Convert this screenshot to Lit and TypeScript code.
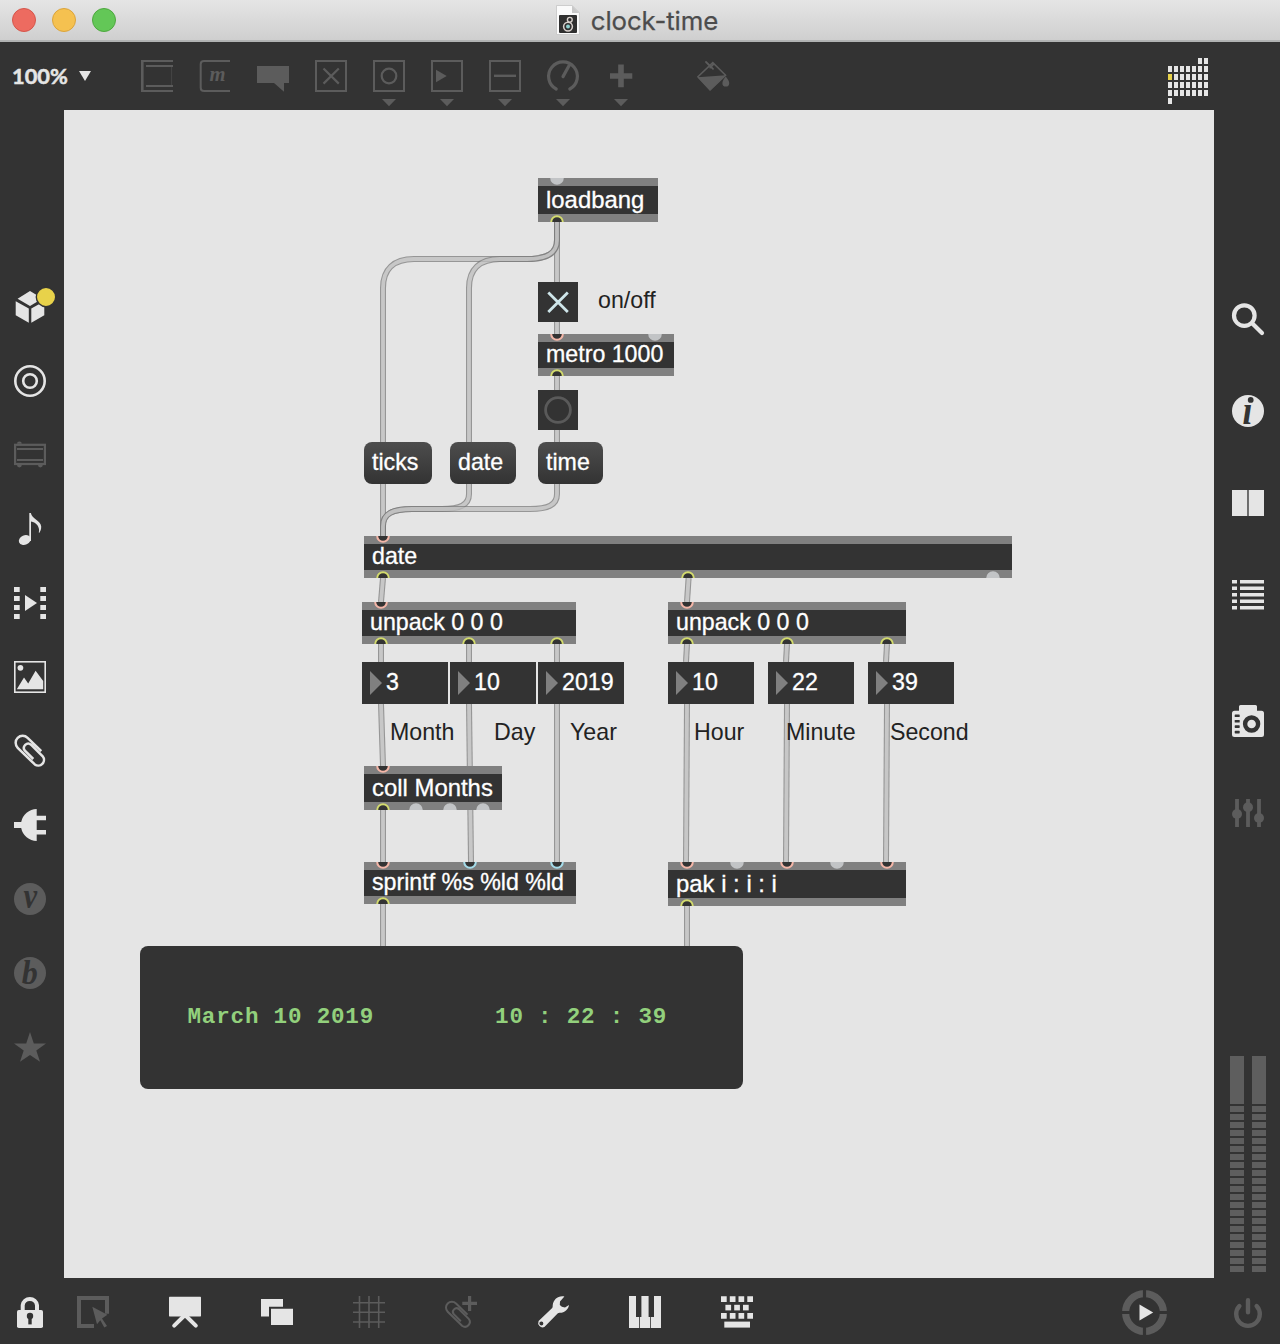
import { LitElement, html, svg, css, type SVGTemplateResult } from "lit";
import { customElement, property } from "lit/decorators.js";
import { styleMap } from "lit/directives/style-map.js";

/* ---------- icon shapes, each drawn in a 32 x 32 box ---------- */

const CLIP = "M27.3 16.2 L13.6 2.9 A7 7 0 0 0 3.7 12.8 L20.8 29.4 A5.7 5.7 0 0 0 28.7 21.3 L17 9.7 A4.3 4.3 0 0 0 10.9 15.7 L19.3 24";
const caret = svg`<path d="M9 39H23L16 46.3Z" fill="currentColor"/>`;
const frame = svg`<rect x="1" y="1" width="30" height="30" fill="none" stroke="currentColor" stroke-width="2"/>`;

const ICONS: Record<string, SVGTemplateResult> = {
  object: svg`
    <path d="M0 0H32V2H2.6V30H32V32H0Z M5 5H32V7H5Z M5 25H32V27H5Z" fill="currentColor"/>
    <path d="M30.6 7V25" stroke="currentColor" stroke-width="1" opacity=".45"/>`,
  message: svg`
    <path d="M31 1H5Q1.7 1 1.7 4.3V27.7Q1.7 31 5 31H31" fill="none" stroke="currentColor" stroke-width="2"/>
    <text class="glyph" x="18.4" y="21" font-size="22" textLength="16" lengthAdjust="spacingAndGlyphs">m</text>`,
  comment: svg`<path d="M0 6H32V23H27V31.8L17 23H0Z" fill="currentColor"/>`,
  toggle: svg`${frame}<path d="M8.5 8.5L23.8 23.6M23.8 8.5L8.5 23.6" stroke="currentColor" stroke-width="2.2"/>`,
  button: svg`${frame}<circle cx="16" cy="16" r="7.3" fill="none" stroke="currentColor" stroke-width="2.2"/>${caret}`,
  number: svg`${frame}<path d="M5 9.7L15.7 16L5 22.3Z" fill="currentColor"/>${caret}`,
  slider: svg`${frame}<path d="M5 15.8H27" stroke="currentColor" stroke-width="2.4"/>${caret}`,
  dial: svg`
    <path d="M9.2 29A14.4 14.4 0 1 1 22.8 29M16 16.6L22 5.8" fill="none" stroke="currentColor" stroke-width="3.2" stroke-linecap="round"/>${caret}`,
  add: svg`<path d="M5 16H27.3M16 4.5V27.3" stroke="currentColor" stroke-width="5.6"/>${caret}`,
  bucket: svg`
    <path d="M.9 16.8L15.8 2.6L28.6 15.3L13 30Z" fill="none" stroke="currentColor" stroke-width="1.5"/>
    <path d="M.6 17.2L28.8 15.2L13.2 30.6Z" fill="currentColor"/>
    <path d="M9 2L16 8.8M16.5 4.2L13.2 7.6" stroke="currentColor" stroke-width="1.8" stroke-linecap="round"/>
    <path d="M28.7 16.6Q32.3 21 32.2 23.2A3.4 3.4 0 0 1 25.4 23.2Q25.4 21 28.7 16.6Z" fill="currentColor"/>`,
  cube: svg`
    <path d="M16 0L28.5 7.4L16 15L3.6 7.8Z M1.7 10.2L14.8 17.4V31.7L1.7 24.3Z M17.3 17.4L30.3 10.2V24.3L17.3 31.7Z" fill="currentColor"/>
    <circle cx="32" cy="6" r="9.7" fill="#e8d24a" stroke="#333" stroke-width="1.4"/>`,
  target: svg`
    <circle cx="16" cy="16" r="14.7" fill="none" stroke="currentColor" stroke-width="2.6"/>
    <circle cx="16" cy="16" r="6.8" fill="none" stroke="currentColor" stroke-width="2.6"/>`,
  amp: svg`
    <rect x="1.1" y="5.8" width="29.8" height="19.2" fill="none" stroke="currentColor" stroke-width="2.2"/>
    <path d="M3 10H29M3 21H29" stroke="currentColor" stroke-width="2"/>
    <path d="M3 4.8A2.4 2.4 0 0 1 7.8 4.8Z M3 26H7.8A2.4 2.4 0 0 1 3 26Z M24 26H28.8A2.4 2.4 0 0 1 24 26Z" fill="currentColor"/>`,
  note: svg`
    <path d="M15.3 0H16.9C17.6 6 27 7.4 27.2 13.6C27.3 16.4 26.4 18.4 25.2 20L24.8 19.6C26.2 14.4 22.4 9.4 17 8.6V28H15.3Z" fill="currentColor"/>
    <ellipse cx="10.8" cy="27" rx="6.2" ry="4.7" transform="rotate(-24 10.8 27)" fill="currentColor"/>`,
  film: svg`
    ${[0, 9, 18, 27].map((y) => svg`<path d="M0 ${y}h5.7v5h-5.7z M26.3 ${y}h5.7v5h-5.7z" fill="currentColor"/>`)}
    <path d="M11 8L23 16L11 24Z" fill="currentColor"/>`,
  picture: svg`
    <rect x=".8" y=".8" width="30.4" height="30.4" fill="none" stroke="currentColor" stroke-width="1.6"/>
    <circle cx="6.4" cy="6.8" r="2.9" fill="currentColor"/>
    <path d="M2.8 28.2L10 16.5L14.2 22.5L21.6 9.7L29.2 20V28.2Z" fill="currentColor"/>`,
  clip: svg`<path d=${CLIP} fill="none" stroke="currentColor" stroke-width="2.5"/>`,
  plug: svg`<path d="M22.7 0V6.8H32V11.2H22.7V21H32V25.6H22.7V32A16 16 0 0 1 7.2 19H0V13H7.2A16 16 0 0 1 22.7 0Z" fill="currentColor"/>`,
  vizzie: svg`<circle cx="16" cy="16" r="16" fill="currentColor"/><text class="glyph cut" x="16.4" y="24.6" font-size="36" textLength="13.6" lengthAdjust="spacingAndGlyphs">v</text>`,
  beap: svg`<circle cx="16" cy="16" r="16" fill="currentColor"/><text class="glyph cut" x="15.8" y="27" font-size="34" textLength="16" lengthAdjust="spacingAndGlyphs">b</text>`,
  star: svg`<path transform="translate(0 .8)" d="M16 .2L19.8 11.6H32L22.3 18.7L26 30L16 23.2L6 30L9.7 18.7L0 11.6H12.2Z" fill="currentColor"/>`,
  search: svg`
    <circle cx="12.3" cy="12.6" r="10.3" fill="none" stroke="currentColor" stroke-width="4.2"/>
    <path d="M20.4 20.4L30 30" stroke="currentColor" stroke-width="4.2" stroke-linecap="round"/>`,
  info: svg`<circle cx="16" cy="16" r="16" fill="currentColor"/><text class="glyph cut" x="15.4" y="29" font-size="40" textLength="10" lengthAdjust="spacingAndGlyphs">ı</text>
    <circle cx="18.7" cy="4.9" r="2.9" fill="#333"/>`,
  split: svg`<path d="M0 3H15.2V29H0Z M17 3H32V29H17Z" fill="currentColor"/><path d="M16.1 3V29" stroke="#777" stroke-width="1.6"/>`,
  list: svg`${[1, 7.5, 14, 20.5, 27].map((y) => svg`<path d="M0 ${y}h5v3.4h-5z M8 ${y}h24v3.4h-24z" fill="currentColor"/>`)}`,
  camera: svg`
    <path d="M8.5 0H23.5Q25 0 25 1.5V5.7H29.5Q32 5.7 32 8.2V29.5Q32 32 29.5 32H2.5Q0 32 0 29.5V8.2Q0 5.7 2.5 5.7H7V1.5Q7 0 8.5 0Z" fill="currentColor"/>
    <circle cx="19.6" cy="19" r="6.5" fill="none" stroke="#333" stroke-width="4.4"/>
    ${[9.5, 14.9, 20.3, 25.8].map((y) => svg`<rect x="2.7" y=${y} width="5" height="2.6" rx=".6" fill="#333"/>`)}`,
  mixer: svg`
    <path d="M5 2V30M16 2V30M27 2V30" stroke="currentColor" stroke-width="3.8"/>
    <circle cx="5" cy="17" r="5" fill="currentColor"/><circle cx="16" cy="10.3" r="5" fill="currentColor"/><circle cx="27" cy="21" r="5" fill="currentColor"/>`,
  lock: svg`
    <path d="M8.7 15V9.3A7.2 7.2 0 0 1 23 9.3V15" fill="none" stroke="currentColor" stroke-width="4"/>
    <rect x="3" y="14" width="26" height="18" rx="1.8" fill="currentColor"/>
    <circle cx="16" cy="20" r="3.2" fill="#333"/><path d="M16 20V28.4" stroke="#333" stroke-width="3.4"/>`,
  select: svg`
    <path d="M17 30H2V2H30V17.7" fill="none" stroke="currentColor" stroke-width="4"/>
    <path d="M15.3 10.7L30.4 18.8L25 22.4L30 30L27.3 31.4L23.3 24.2L20 28.3Z" fill="currentColor"/>`,
  present: svg`
    <rect x="0" y=".8" width="32" height="19.6" rx=".6" fill="currentColor"/>
    <path d="M15.5 19.5L5.2 29.6M16.5 19.5L26.8 29.6" stroke="currentColor" stroke-width="4" stroke-linecap="round"/>`,
  layers: svg`<path d="M0 3H22V10.8H8V20.6H0Z M10 12.8H32V29H10Z" fill="currentColor"/>`,
  grid: svg`<path d="M6.5 0V32M16 0V32M25.7 0V32M0 6.8H32M0 16.3H32M0 26H32" stroke="currentColor" stroke-width="1.6"/>`,
  clipAdd: svg`
    <path d=${CLIP} transform="translate(-.4 5) scale(.84)" fill="none" stroke="currentColor" stroke-width="2.4"/>
    <path d="M17.3 7.3H32M24.6 0V15" stroke="currentColor" stroke-width="3.2"/>`,
  wrench: svg`
    <path fill-rule="evenodd" d="M27.4 .5C21.5 -.8 16.2 3.2 15.7 9.6Q15.8 11.2 15.2 11.9L1.6 25A4.5 4.5 0 0 0 7.4 31L20.6 17.4Q21.3 16.8 22.6 16.8C27.2 17 31.6 13.4 32 9L28 11.4Q24.4 11.4 22.8 9L23 5.4Z M4.4 25.4A2 2 0 1 1 4.3 29.4A2 2 0 1 1 4.4 25.4Z" fill="currentColor"/>`,
  piano: svg`<path d="M0 0H7V21H10.2V32H0Z M12.4 0H19.6V21H21.2V32H11V21H12.4Z M25 0H32V32H22V21H25Z" fill="currentColor"/>`,
  keyboard: svg`
    ${[0, 8.8, 17.5, 26.3].map((x) => svg`<path d="M${x} .2h5.7v5.8h-5.7z M${x} 17h5.7v5.8h-5.7z" fill="currentColor"/>`)}
    ${[4.4, 13.2, 22].map((x) => svg`<path d="M${x} 8.8h5.7v5.6h-5.7z" fill="currentColor"/>`)}
    <path d="M3.3 25.6H29V31.6H3.3Z" fill="currentColor"/>`,
  power: svg`<path d="M7.4 10A11.8 11.8 0 1 0 24.6 10M16 4.2V16.2" fill="none" stroke="currentColor" stroke-width="4.4" stroke-linecap="round"/>`,
};

@customElement("ui-icon")
class UiIcon extends LitElement {
  @property() name = "";
  @property({ type: Number }) tall = 32;
  static styles = css`
    :host { display: block; flex: none; width: 32px; }
    svg { display: block; overflow: visible; }
    .glyph { font-family: "Liberation Serif", serif; font-weight: 700; font-style: italic; text-anchor: middle; fill: currentColor; }
    .cut { fill: #333; }
  `;
  render() {
    return html`<svg width="32" height=${this.tall} viewBox="0 0 32 ${this.tall}">${ICONS[this.name]}</svg>`;
  }
}

/* ---------- patch data; coordinates are relative to the window ---------- */

const ORIGIN = { x: 64, y: 110 };

type Port = [x: number, kind: "hot" | "cold" | "out" | "off"];
interface Obj { x: number; y: number; w: number; h: number; text: string; ins: Port[]; outs: Port[] }

const OBJECTS: Obj[] = [
  { x: 538, y: 178, w: 120, h: 44, text: "loadbang", ins: [[557, "off"]], outs: [[557, "out"]] },
  { x: 538, y: 334, w: 136, h: 42, text: "metro 1000", ins: [[557, "hot"], [655, "off"]], outs: [[557, "out"]] },
  { x: 364, y: 536, w: 648, h: 42, text: "date", ins: [[383, "hot"]], outs: [[383, "out"], [688, "out"], [993, "off"]] },
  { x: 362, y: 602, w: 214, h: 42, text: "unpack 0 0 0", ins: [[381, "hot"]], outs: [[381, "out"], [469, "out"], [557, "out"]] },
  { x: 668, y: 602, w: 238, h: 42, text: "unpack 0 0 0", ins: [[687, "hot"]], outs: [[687, "out"], [787, "out"], [887, "out"]] },
  { x: 364, y: 766, w: 138, h: 44, text: "coll Months", ins: [[383, "hot"]], outs: [[383, "out"], [416, "off"], [449.5, "off"], [483, "off"]] },
  { x: 364, y: 862, w: 212, h: 42, text: "sprintf %s %ld %ld", ins: [[383, "hot"], [470, "cold"], [557, "cold"]], outs: [[383, "out"]] },
  { x: 668, y: 862, w: 238, h: 44, text: "pak i : i : i", ins: [[687, "hot"], [737, "off"], [787, "hot"], [837, "off"], [887, "hot"]], outs: [[687, "out"]] },
];
const MESSAGES = [
  { x: 364, y: 442, w: 68, text: "ticks" },
  { x: 450, y: 442, w: 66, text: "date" },
  { x: 538, y: 442, w: 65, text: "time" },
];
const NUMBERS = [
  { x: 362, y: 662, text: "3" }, { x: 450, y: 662, text: "10" }, { x: 538, y: 662, text: "2019" },
  { x: 668, y: 662, text: "10" }, { x: 768, y: 662, text: "22" }, { x: 868, y: 662, text: "39" },
];
const LABELS = [
  { x: 598, y: 287, text: "on/off" },
  { x: 390, y: 719, text: "Month" }, { x: 494, y: 719, text: "Day" }, { x: 570, y: 719, text: "Year" },
  { x: 694, y: 719, text: "Hour" }, { x: 786, y: 719, text: "Minute" }, { x: 890, y: 719, text: "Second" },
];
const CORDS = [
  "M557 222V282",
  "M557 222V240C557 253 548 259 527 259H414C394 259 383 269 383 288V442",
  "M557 222V240C557 253 548 259 527 259H500C480 259 469 269 469 288V442",
  "M557 322V336", "M557 376V390", "M557 430V442",
  "M383 484V537",
  "M469 484V494C469 505 460 509 442 509H412C392 509 383 514 383 526V537",
  "M557 484V494C557 505 548 509 530 509H412C392 509 383 514 383 526V537",
  "M383 578L381 602", "M688.6 578L687 602",
  "M381 644V662", "M469 644V662", "M557 644V662",
  "M687 644L686 662", "M787 644L786 662", "M887 644L886 662",
  "M381 704L383 766", "M469 704L471 862", "M557 704V862",
  "M687 704L686 862", "M787 704L786 862", "M887 704L886 862",
  "M383 810V862", "M383 904V946", "M687 906V946",
];

const place = (o: { x: number; y: number; w?: number; h?: number }) =>
  styleMap({
    left: `${o.x - ORIGIN.x}px`,
    top: `${o.y - ORIGIN.y}px`,
    width: o.w ? `${o.w}px` : null,
    height: o.h ? `${o.h}px` : null,
  });

@customElement("patch-canvas")
class PatchCanvas extends LitElement {
  static styles = css`
    :host { display: block; position: relative; background: #e5e5e5; overflow: hidden;
      font: 23.2px/26px "Liberation Sans", Arial, sans-serif; color: #fff; -webkit-text-stroke: .3px; }
    .cords { position: absolute; inset: 0; }
    .cord { opacity: .75; fill: none; }
    .casing { stroke: #7c7c7c; stroke-width: 6; }
    .core { stroke: #bebebe; stroke-width: 3.8; }
    .obj, .msg, .num, .label, .ui, .lcd, .port { position: absolute; box-sizing: border-box; white-space: pre; }
    .obj { background: #333; border: solid #808080; border-width: 8px 0; padding-left: 8px; line-height: 24px; }
    .obj.large { font-size: 23.9px; line-height: 27px; }
    .port { width: 14px; height: 7px; overflow: hidden; display: block; }
    .in { top: -8px; }
    .outlet { bottom: -8px; }
    .hot { stroke: #f4b6a8; } .cold { stroke: #a5dcea; } .out { stroke: #d3db6d; }
    .disc { fill: #333; stroke-width: 2; }
    .disc.off { fill: #c2c4c6; stroke: #c2c4c6; }
    .msg { height: 42px; padding-left: 8px; line-height: 41px; border-radius: 8px; background: linear-gradient(#4d4d4d, #333); }
    .num { width: 86px; height: 42px; padding-left: 8px; display: flex; align-items: center; gap: 4px; background: #333; }
    .num span { line-height: 26px; padding-bottom: 3px; }
    .label { color: #222; -webkit-text-stroke: 0; }
    .ui { width: 40px; height: 40px; background: #333; }
    .ui svg { display: block; }
    .lcd { width: 603px; height: 143px; border-radius: 8px; background: #333; color: #92d07c; display: flex; gap: 121px;
      padding: 57px 0 0 47.5px; font: 700 22.6px/28px "Liberation Mono", "Courier New", monospace; letter-spacing: .79px; -webkit-text-stroke: 0; }
  `;

  private port([x, kind]: Port, obj: Obj, side: "in" | "outlet") {
    return html`<svg class="port ${side}" style=${styleMap({ left: `${x - obj.x - 7}px` })} viewBox="0 0 14 7">
      <circle class="disc ${kind}" cx="7" cy=${side === "in" ? 0 : 7} r="5.8" />
    </svg>`;
  }

  render() {
    return html`
      <svg class="cords" width="1150" height="1168" viewBox="64 110 1150 1168">
        ${CORDS.map((d) => svg`<g class="cord"><path class="casing" d=${d}/><path class="core" d=${d}/></g>`)}
      </svg>
      ${OBJECTS.map((o) => html`<div class="obj ${o.h === 44 ? "large" : ""}" style=${place(o)}>${o.text}${o.ins.map((p) => this.port(p, o, "in"))}${o.outs.map((p) => this.port(p, o, "outlet"))}</div>`)}
      ${MESSAGES.map((m) => html`<div class="msg" style=${place(m)}>${m.text}</div>`)}
      ${NUMBERS.map((n) => html`<div class="num" style=${place(n)}><svg width="12" height="24" viewBox="0 0 12 24"><path d="M0 0L12 12L0 24Z" fill="#808080"/></svg><span>${n.text}</span></div>`)}
      ${LABELS.map((l) => html`<div class="label" style=${place(l)}>${l.text}</div>`)}
      <div class="ui" style=${place({ x: 538, y: 282 })}><svg width="40" height="40"><path d="M10.3 10.5L29.8 30M29.8 10.5L10.3 30" stroke="#cfe6ea" stroke-width="2.8"/></svg></div>
      <div class="ui" style=${place({ x: 538, y: 390 })}><svg width="40" height="40"><circle cx="20" cy="20" r="12.4" fill="none" stroke="#5a5a5a" stroke-width="2.8"/></svg></div>
      <div class="lcd" style=${place({ x: 140, y: 946 })}><span>March 10 2019</span><span>10 : 22 : 39</span></div>
    `;
  }
}

/* ---------- window chrome ---------- */

const TOOLS = ["object", "message", "comment", "toggle", "button", "number", "slider", "dial", "add"];
const BROWSERS: [string, boolean][] = [
  ["cube", true], ["target", true], ["amp", false], ["note", true], ["film", true], ["picture", true],
  ["clip", true], ["plug", true], ["vizzie", false], ["beap", false], ["star", false],
];
const ACTIONS: [string, boolean][] = [
  ["select", false], ["present", true], ["layers", true], ["grid", false],
  ["clipAdd", false], ["wrench", true], ["piano", true], ["keyboard", true],
];
const CALENDAR = [[5, 6], [0, 1, 2, 3, 4, 5, 6], [0, 1, 2, 3, 4, 5, 6], [0, 1, 2, 3, 4, 5, 6], [0, 1, 2, 3, 4, 5, 6], [0]];
const METER_STEPS = Array.from({ length: 21 });

@customElement("app-root")
class AppRoot extends LitElement {
  static styles = css`
    :host { display: grid; grid-template: 42px 68px 1168px 66px / 64px 1150px 66px; width: 1280px; height: 1344px;
      overflow: hidden; background: #333; color: #e5e5e5; font-family: "Liberation Sans", sans-serif; }
    svg { display: block; flex: none; }
    .dim { color: #5c5c5c; }
    .titlebar { grid-column: 1 / -1; box-sizing: border-box; border-bottom: 2px solid #b1b3b3; background: linear-gradient(#e5e5e5, #cfcfcf);
      display: grid; grid-template-columns: 1fr auto 1fr; align-items: center; padding: 0 18px 0 12px; }
    .lights { display: flex; gap: 16px; }
    .light { box-sizing: border-box; width: 24px; height: 24px; border-radius: 50%; border: 1px solid #d5564b; background: #ed6b60; }
    .light.min { border-color: #dba43c; background: #f5c150; }
    .light.max { border-color: #4ea83f; background: #63c757; }
    .title { display: flex; align-items: center; gap: 11px; color: #4c4c4c; font: 25.8px/32px Inter, "Liberation Sans", sans-serif;
      letter-spacing: -.1px; -webkit-text-stroke: .25px; }
    .title span { padding-top: 1px; }
    .toolbar { grid-column: 1 / -1; display: flex; align-items: flex-start; padding: 18px 72px 0 12px; }
    .zoom { width: 129px; height: 32px; display: flex; align-items: center; gap: 11px; font: 700 21.8px/32px Lato, sans-serif; -webkit-text-stroke: .5px; }
    .tools { display: flex; gap: 26px; }
    .fill { margin-left: 60px; }
    .calendar { margin: -2px 0 0 auto; }
    .left { box-sizing: border-box; padding: 181px 0 0 14px; display: flex; flex-direction: column; gap: 42px; }
    .right { box-sizing: border-box; padding: 193px 0 6px 16px; display: flex; flex-direction: column; gap: 60px; }
    .right ui-icon { margin-left: 2px; }
    .later { margin-top: 34px; }
    .meters { margin-top: auto; display: flex; gap: 8px; }
    .meter { width: 14px; display: flex; flex-direction: column; gap: 2px; }
    .head { height: 48px; background: #5e5e5e; }
    .step { height: 6px; background: #5e5e5e; }
    .bottom { grid-column: 1 / -1; display: flex; align-items: flex-start; padding: 18px 16px 0 14px; }
    .actions { display: flex; gap: 60px; margin-left: 31px; }
    .play { margin: -6px 65px 0 auto; }
  `;

  private icon([name, active]: [string, boolean]) {
    return html`<ui-icon class=${active ? "" : "dim"} name=${name}></ui-icon>`;
  }

  render() {
    const meter = html`<div class="meter"><div class="head"></div>${METER_STEPS.map(() => html`<div class="step"></div>`)}</div>`;
    return html`
      <header class="titlebar">
        <div class="lights"><div class="light"></div><div class="light min"></div><div class="light max"></div></div>
        <div class="title">
          <svg width="24" height="30" viewBox="0 0 24 30">
            <path d="M.5 .5H16L23.4 7.5V29.5H.5Z" fill="#fafafa" stroke="#c4c4c4" stroke-width=".8"/>
            <path d="M16 .5V8H23.4Z" fill="#c8c8c8"/>
            <rect x="3" y="10" width="18" height="18" rx="1" fill="#2f2f2f"/>
            <circle cx="13.8" cy="14.8" r="2.4" fill="none" stroke="#d8d0cc" stroke-width="1.4"/>
            <circle cx="12" cy="21.6" r="4.4" fill="none" stroke="#d8d0cc" stroke-width="1.5"/>
            <circle cx="12" cy="21.6" r="2" fill="#8fd0cf"/>
          </svg>
          <span>clock-time</span>
        </div>
      </header>

      <nav class="toolbar">
        <div class="zoom"><span>100%</span><svg width="12" height="10" viewBox="0 0 12 10"><path d="M0 0H12L6 10Z" fill="currentColor"/></svg></div>
        <div class="tools dim">${TOOLS.map((t) => html`<ui-icon name=${t} .tall=${48}></ui-icon>`)}</div>
        <ui-icon class="fill dim" name="bucket"></ui-icon>
        <svg class="calendar" width="40" height="46" viewBox="0 0 40 46">
          ${CALENDAR.map((cols, r) => cols.map((c) => svg`<rect x=${c * 6} y=${r * 8} width="4" height="6" fill=${r === 2 && c === 0 ? "#e8d24a" : "#e5e5e5"}/>`))}
        </svg>
      </nav>

      <aside class="left">${BROWSERS.map((b) => this.icon(b))}</aside>
      <patch-canvas></patch-canvas>
      <aside class="right">
        <ui-icon name="search"></ui-icon>
        <ui-icon name="info"></ui-icon>
        <ui-icon name="split"></ui-icon>
        <ui-icon name="list"></ui-icon>
        <ui-icon class="later" name="camera"></ui-icon>
        <ui-icon class="dim" name="mixer"></ui-icon>
        <div class="meters">${meter}${meter}</div>
      </aside>

      <footer class="bottom">
        <ui-icon name="lock"></ui-icon>
        <div class="actions">${ACTIONS.map((a) => this.icon(a))}</div>
        <svg class="play" width="45" height="45" viewBox="-22.5 -22.5 45 45">
          <circle r="18.9" fill="none" stroke="#5c5c5c" stroke-width="7.2"/>
          <path d="M0 -23V-14M0 14V23M-23 0H-14M14 0H23" stroke="#333" stroke-width="3.2"/>
          <path d="M-5 -8L8.7 0L-5 8Z" fill="#e5e5e5"/>
        </svg>
        <ui-icon class="dim" name="power"></ui-icon>
      </footer>
    `;
  }
}
